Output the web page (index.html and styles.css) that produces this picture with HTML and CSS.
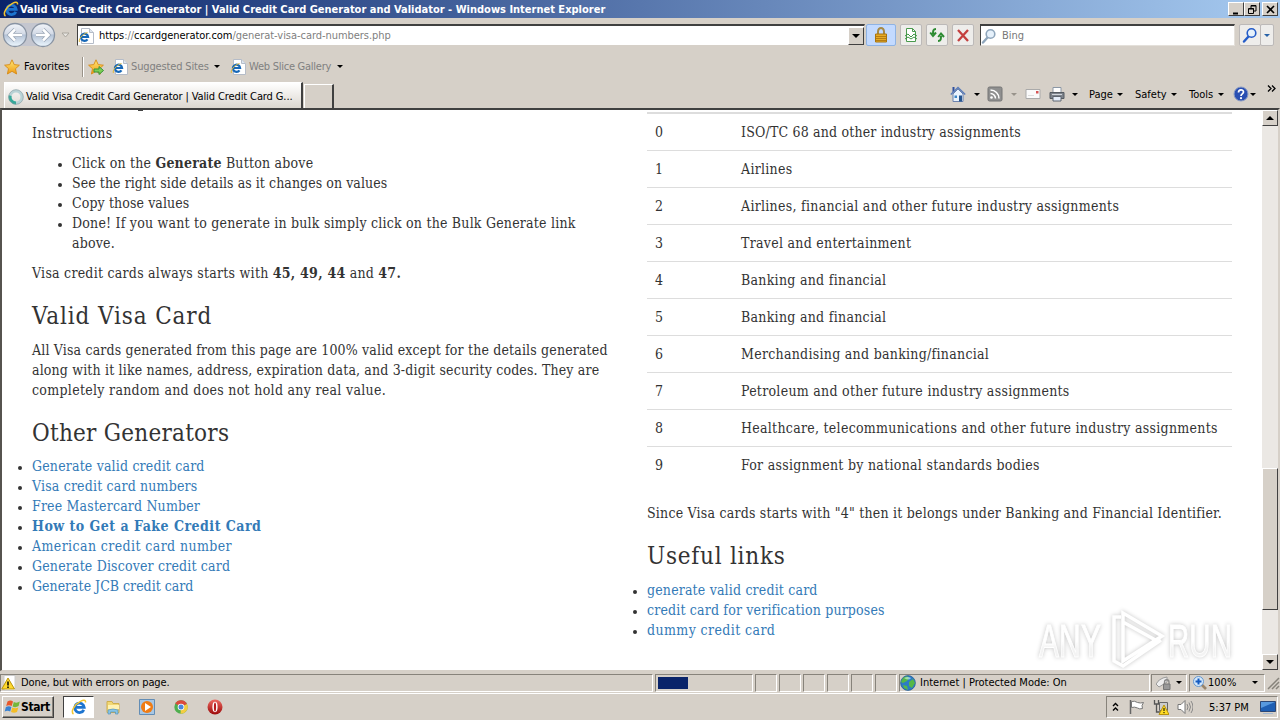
FILE: index.html
```
<!DOCTYPE html>
<html lang="en">
<head>
    <meta charset="UTF-8">
    <meta name="viewport" content="width=device-width, initial-scale=1.0">
    <title>Valid Visa Credit Card Generator | Valid Credit Card Generator and Validator</title>
    <link rel="stylesheet" href="styles.css">
</head>
<body>
    <svg class="defs" width="0" height="0">
        <defs>
            <linearGradient id="gold" x1="0" y1="0" x2="0" y2="1"><stop offset="0" stop-color="#ffe978"/><stop offset="1" stop-color="#ef9a12"/></linearGradient>
            <linearGradient id="orb" x1="0" y1="0" x2="0" y2="1"><stop offset="0" stop-color="#f2f5fa"/><stop offset=".45" stop-color="#d3dae6"/><stop offset=".5" stop-color="#b4c2d6"/><stop offset="1" stop-color="#eef8ff"/></linearGradient>
            <linearGradient id="red" x1="0" y1="0" x2="0" y2="1"><stop offset="0" stop-color="#ee6a62"/><stop offset="1" stop-color="#9c0a0a"/></linearGradient>
            <linearGradient id="wm" x1="0" y1="0" x2="0" y2="1"><stop offset=".5" stop-color="#fff"/><stop offset=".65" stop-color="#f3f3f3"/></linearGradient>
            <symbol id="ie" viewBox="0 0 16 16">
                <path d="M12.800 10.800a4.700 4.700 0 1 1 .4-2.500H5" fill="none" stroke="#1d74cf" stroke-width="2.800"/>
                <path d="M2.500 15C-1 13 4 5 9.500 2.300 12 1 15 .5 14.500 3.500" fill="none" stroke="#f3c52f" stroke-width="1.500"/>
            </symbol>
            <symbol id="iepage" viewBox="0 0 16 16">
                <path d="M3.500.5h8l4 4v11h-12z" fill="#fff" stroke="#b5bcc8"/>
                <path d="M11.500.5v4h4" fill="#dde5ef" stroke="#b5bcc8"/>
                <path d="M9.500 11.300a3.600 3.600 0 1 1 .6-2.300H3.500" fill="none" stroke="#1768b8" stroke-width="2.200"/>
                <path d="M1.500 14C0 12 4 6 9.500 4.500" fill="none" stroke="#e0b93a"/>
            </symbol>
            <symbol id="star" viewBox="0 0 16 16">
                <path d="M8 .8l2.200 4.800 5.200.6-3.900 3.500 1.100 5.300L8 12.300 3.400 15l1.100-5.300L.6 6.200l5.200-.6z" fill="url(#gold)" stroke="#d68a17" stroke-width=".9"/>
            </symbol>
            <symbol id="lens" viewBox="0 0 16 16">
                <path d="M6.500 9.500L2 14.500" stroke="currentColor" stroke-width="2.400" stroke-linecap="round"/>
                <circle cx="9.500" cy="6" r="4.300" fill="#e6f1fb" stroke="currentColor" stroke-width="1.600"/>
            </symbol>
        </defs>
    </svg>

    <div class="window">
        <div class="titlebar">
            <svg class="ic"><use href="#ie"/></svg>
            <span class="title">Valid Visa Credit Card Generator | Valid Credit Card Generator and Validator - Windows Internet Explorer</span>
            <div class="winbtns">
                <svg class="winbtn"><path d="M4 10.500h5" stroke="#000" stroke-width="2"/></svg>
                <svg class="winbtn"><path d="M6 3h5M6 6V2.500h5V8H9M4 6h5M3.500 5.500h5v5h-5z" fill="none" stroke="#000"/></svg>
                <svg class="winbtn close"><path d="M4 3l7 7M11 3l-7 7" stroke="#000" stroke-width="1.600"/></svg>
            </div>
        </div>

        <div class="nav">
            <svg class="orbs" viewBox="0 0 54 27">
                <rect x="8" y="1" width="38" height="23" fill="#c4c6cf"/>
                <circle cx="13" cy="13" r="11.500" fill="url(#orb)" stroke="#8994a3" stroke-width="1.300"/>
                <circle cx="41" cy="13" r="11.500" fill="url(#orb)" stroke="#8994a3" stroke-width="1.300"/>
                <path d="M20 13H8m5-5.500L7.500 13l5.500 5.500" fill="none" stroke="#98a5b5" stroke-width="4"/>
                <path d="M34 13h12m-5-5.500l5.500 5.500-5.500 5.500" fill="none" stroke="#98a5b5" stroke-width="4"/>
                <path d="M20 13H8m5-5.500L7.500 13l5.500 5.500" fill="none" stroke="#fff" stroke-width="2.600"/>
                <path d="M34 13h12m-5-5.500l5.500 5.500-5.500 5.500" fill="none" stroke="#fff" stroke-width="2.600"/>
            </svg>
            <svg class="history" viewBox="0 0 9 6"><path d="M1 1h7L4.500 5z" fill="#e8e6e2" stroke="#aaa69e"/></svg>
            <div class="address">
                <svg class="ic"><use href="#iepage"/></svg>
                <span class="url">https<i>://</i>ccardgenerator.com<i>/generat-visa-card-numbers.php</i></span>
                <span class="drop"><b class="arrow"></b></span>
            </div>
            <div class="tool lock">
                <svg class="ic"><path d="M5 8V4.500a3 3.500 0 0 1 6 0V8" fill="none" stroke="#a68a48" stroke-width="2"/><path d="M2.500 7h11v8h-11z" fill="#e8ab25" stroke="#a87410"/><path d="M3 9.500h10M3 11.500h10M3 13.500h10" stroke="#b57d14"/></svg>
            </div>
            <div class="tool">
                <svg class="ic"><path d="M3.500 1.500h6l3 3v10h-9z" fill="#fff" stroke="#4a9a4d"/><path d="M9.500 1.500v3h3" fill="none" stroke="#4a9a4d"/><path d="M2 9l3-2 3 3 3-3 3 2M2 12l3-2 3 2 3-2 3 2" fill="none" stroke="#3f9545"/></svg>
            </div>
            <div class="tool">
                <svg class="ic"><path d="M7 2C4 2 4 4 4 7M1.200 5.500L4 9l3-3.500M9 14c3 0 3-2 3-5M9.200 10L12 6.500l3 3.500" fill="none" stroke="#2c8a31" stroke-width="2"/></svg>
            </div>
            <div class="tool">
                <svg class="ic"><path d="M3 3l10 11M13 3L3 14" stroke="#c4403f" stroke-width="2.300"/></svg>
            </div>
            <div class="search">
                <svg class="ic"><use href="#lens"/></svg>
                <span>Bing</span>
            </div>
            <div class="tool go"><svg class="ic"><use href="#lens"/></svg></div>
            <div class="tool godrop"><b class="arrow blue"></b></div>
        </div>

        <div class="favorites">
            <svg class="ic"><use href="#star"/></svg>
            <span class="favtext">Favorites</span>
            <span class="sep"></span>
            <svg class="ic"><use href="#star"/><path d="M6 10h5V7.500l4.500 4L11 15.500V13H6z" fill="#7ccf55" stroke="#38923a"/></svg>
            <svg class="ic sug"><use href="#iepage"/></svg>
            <span class="muted sugtext">Suggested Sites</span><b class="arrow"></b>
            <svg class="ic web"><use href="#iepage"/></svg>
            <span class="muted webtext">Web Slice Gallery</span><b class="arrow"></b>
        </div>

        <div class="tabs">
            <div class="tab">
                <svg class="ic"><circle cx="8" cy="8" r="6" fill="none" stroke="#b9d3d6" stroke-width="3"/><path d="M2.200 6.500A6 6 0 0 0 8 14" fill="none" stroke="#35a99a" stroke-width="3"/><circle cx="8" cy="8" r="7.300" fill="none" stroke="#8a9aa0" stroke-width=".6"/></svg>
                <span>Valid Visa Credit Card Generator | Valid Credit Card G...</span>
            </div>
            <div class="newtab"></div>
            <div class="commands">
                <svg class="ic"><path d="M2.500 1v5h2V1z" fill="#2e4f9e"/><path d="M3 8l5-5 5 5v7.500H3z" fill="#e9f2fd" stroke="#6b82ae"/><path d="M.8 8.500L8 1.500l7.200 7" fill="none" stroke="#5b7cb8" stroke-width="1.500"/><path d="M9 9.500h3v6H9z" fill="#26558f"/><path d="M4.500 9.500h2.500v2.500H4.500z" fill="#3c87c7"/></svg>
                <b class="arrow a1"></b>
                <svg class="ic rss" viewBox="0 0 16 16"><rect x="1" y="1" width="14" height="14" rx="1.500" fill="#8f8f8f" stroke="#757575"/><circle cx="4.500" cy="11.500" r="1.300" fill="#fff"/><path d="M3.500 7.500a5 5 0 0 1 5 5M3.500 4a8.500 8.500 0 0 1 8.500 8.500" fill="none" stroke="#fff" stroke-width="1.500"/></svg>
                <b class="arrow a2 dim"></b>
                <svg class="ic mail" viewBox="0 0 16 16"><path d="M1 3.500h14v9H1z" fill="#fafafa" stroke="#aaa"/><path d="M11 5h2.500v2.500H11z" fill="#d65454"/><path d="M3 9.500h6" stroke="#ddd"/></svg>
                <svg class="ic printer"><path d="M4 1.500h8v5H4z" fill="#fff" stroke="#8b97a5"/><path d="M1 6.500h14v6H1z" fill="#7d838b" stroke="#555b62"/><path d="M3 8.500h10" stroke="#d1d6dc"/><path d="M4 10.500h8v4.500H4z" fill="#e5eefa" stroke="#5f6670"/></svg>
                <b class="arrow a3"></b>
                <span class="menu page-m">Page</span><b class="arrow"></b>
                <span class="menu safety-m">Safety</span><b class="arrow"></b>
                <span class="menu tools-m">Tools</span><b class="arrow"></b>
                <svg class="ic help"><circle cx="8" cy="8" r="7" fill="#2a4fb2" stroke="#8b9cc4"/><path d="M5.500 6.500C5.500 3 10.500 3 10.500 6 10.500 8 8 7.800 8 10" fill="none" stroke="#fff" stroke-width="1.700"/><circle cx="8" cy="12.200" r="1.100" fill="#fff"/></svg>
                <b class="arrow"></b>
                <svg class="more" viewBox="0 0 9 7"><path d="M1 .5l3 3-3 3M5 .5l3 3-3 3" fill="none" stroke="#000" stroke-width="1.300"/></svg>
            </div>
        </div>

        <div class="viewport">
            <div class="page">
                <span class="cut"></span>
                <div class="col left">
                    <p class="t1">Instructions</p>
                    <ul class="steps">
                        <li>Click on the <strong>Generate</strong> Button above</li>
                        <li class="s2">See the right side details as it changes on values</li>
                        <li class="s3">Copy those values</li>
                        <li>Done! If you want to generate in bulk simply click on the Bulk Generate link<br>above.</li>
                    </ul>
                    <p class="t2">Visa credit cards always starts with <strong>45, 49, 44</strong> and <strong>47.</strong></p>
                    <h3 class="h-valid">Valid Visa Card</h3>
                    <p class="t3">All Visa cards generated from this page are 100% valid except for the details generated<br>along with it like names, address, expiration data, and 3-digit security codes. They are<br><span>completely random and does not hold any real value.</span></p>
                    <h3 class="h-other">Other Generators</h3>
                    <ul class="links">
                        <li><a>Generate valid credit card</a></li>
                        <li><a>Visa credit card numbers</a></li>
                        <li><a>Free Mastercard Number</a></li>
                        <li><a><strong>How to Get a Fake Credit Card</strong></a></li>
                        <li><a class="wide">American credit card number</a></li>
                        <li><a>Generate Discover credit card</a></li>
                        <li><a class="tight">Generate JCB credit card</a></li>
                    </ul>
                </div>
                <div class="col right">
                    <table>
                        <tr><td>0</td><td class="iso">ISO/TC 68 and other industry assignments</td></tr>
                        <tr><td>1</td><td>Airlines</td></tr>
                        <tr><td>2</td><td>Airlines, financial and other future industry assignments</td></tr>
                        <tr><td>3</td><td>Travel and entertainment</td></tr>
                        <tr><td>4</td><td>Banking and financial</td></tr>
                        <tr><td>5</td><td>Banking and financial</td></tr>
                        <tr><td>6</td><td>Merchandising and banking/financial</td></tr>
                        <tr><td>7</td><td>Petroleum and other future industry assignments</td></tr>
                        <tr><td>8</td><td>Healthcare, telecommunications and other future industry assignments</td></tr>
                        <tr><td>9</td><td>For assignment by national standards bodies</td></tr>
                    </table>
                    <p class="t4">Since Visa cards starts with "4" then it belongs under Banking and Financial Identifier.</p>
                    <h3 class="h-useful">Useful links</h3>
                    <ul class="links">
                        <li><a>generate valid credit card</a></li>
                        <li><a>credit card for verification purposes</a></li>
                        <li><a class="wide">dummy credit card</a></li>
                    </ul>
                </div>
                <svg class="watermark" viewBox="0 0 204 62">
                    <g class="wm-text">
                        <text x="6" y="49" textLength="62" lengthAdjust="spacingAndGlyphs">ANY</text>
                        <text x="135" y="49" textLength="64" lengthAdjust="spacingAndGlyphs">RUN</text>
                    </g>
                    <path class="wm-logo" d="M88 9h-7v44l9 5 38-26M90 5v48l39-25zM90 14l36 20"/>
                </svg>
            </div>
            <div class="scroll">
                <span class="sbtn"><b class="arrow up"></b></span>
                <span class="thumb"></span>
                <span class="sbtn end"><b class="arrow"></b></span>
            </div>
        </div>

        <div class="status">
            <div class="pane msg">
                <svg class="ic"><path d="M3 .5h11v15H3z" fill="#fff" stroke="#ccc"/><path d="M7 3l6.500 11H.8z" fill="#ffd92e" stroke="#b99409"/><path d="M7 6.500v4M7 11.500v1.500" stroke="#000" stroke-width="1.500"/></svg>
                <span>Done, but with errors on page.</span>
            </div>
            <div class="pane progress"><span></span></div>
            <div class="pane cell"></div>
            <div class="pane cell"></div>
            <div class="pane cell"></div>
            <div class="pane cell"></div>
            <div class="pane cell"></div>
            <div class="pane cell"></div>
            <div class="pane zone">
                <svg class="ic"><circle cx="8" cy="8" r="7.400" fill="#2c7cc4" stroke="#23588d" stroke-width=".7"/><path d="M3 3c3-2 5-2 6 0L7 6l-4 2-2-1zM9 7l4-3 2 4-3 5-3-2zM3 10l4 1 1 4-4-2z" fill="#55b846"/><path d="M4 3q4-2 7 0-2 3-7 0" fill="#d4f3fa" opacity=".6"/></svg>
                <span>Internet | Protected Mode: On</span>
            </div>
            <div class="pane privacy">
                <svg class="ic" viewBox="0 0 16 16"><path d="M0 9q3-5 7-6l4-1v5L3 12z" fill="#eee" stroke="#999"/><path d="M8.500 9V7a2 2 0 0 1 4.500 0v2" fill="none" stroke="#888" stroke-width="1.300"/><path d="M7.500 9h6.500v5.500H7.500z" fill="#999" stroke="#777"/></svg>
                <b class="arrow"></b>
            </div>
            <div class="pane zoom">
                <svg class="ic"><path d="M9 9l5 5" stroke="#9a856b" stroke-width="2.600"/><circle cx="6.500" cy="6.500" r="5" fill="#d4e8fb" stroke="#6497cf"/><path d="M6.500 3.500v6M3.500 6.500h6" stroke="#145ac0" stroke-width="2"/></svg>
                <span>100%</span><b class="arrow"></b>
            </div>
            <svg class="grip" viewBox="0 0 13 14"><path d="M1 13L12 2M5 13l7-7M9 13l3-3" stroke="#87837b" stroke-width="1.500"/></svg>
        </div>

        <div class="taskbar">
            <div class="start">
                <svg class="ic" viewBox="0 0 16 16"><path d="M3.500 2.500q3-2 5.500 0L7.700 7Q5 5.500 2.200 7z" fill="#e9582b"/><path d="M9.800 3q3 1.500 6-.5l-1.200 4.500q-3 2-6 .5z" fill="#75b73b"/><path d="M1.900 8q3-1.500 5.500 0L6.200 12.500q-2.500-1.500-5.500 0z" fill="#3982d2"/><path d="M8.300 8.500q3 1.500 6 0L13 13q-3 1.500-6 0z" fill="#f4bd26"/></svg>
                <span>Start</span>
            </div>
            <div class="task active"><svg class="ic"><use href="#ie"/></svg></div>
            <svg class="ic explorer"><path d="M2 2.500h5l1 2h6v9H2z" fill="#f2d874" stroke="#cfae4e"/><path d="M3 6h11v4H3z" fill="#fff2b3"/><path d="M3 15v-4q5-2 10 0v4h-2.500v-2h-5v2z" fill="#87c4e4" stroke="#5796bd" stroke-width=".7"/></svg>
            <svg class="ic media"><path d="M.5.500h15v15H.5z" fill="#a8c7e4" stroke="#638db5"/><circle cx="8" cy="8" r="6" fill="#f07c14"/><path d="M6 4l6 4-6 4z" fill="#fff"/></svg>
            <svg class="ic chrome"><circle cx="8" cy="8" r="6.700" fill="#4fae4e"/><path d="M8 8L2.200 4.600A6.700 6.700 0 0 1 14 5z" fill="#dc4a3d"/><path d="M8 8l6-3a6.700 6.700 0 0 1-6.500 9.700z" fill="#f4cd42"/><circle cx="8" cy="8" r="3.300" fill="#fff"/><circle cx="8" cy="8" r="2.500" fill="#4b87dd"/></svg>
            <svg class="ic opera"><circle cx="8" cy="8" r="7.500" fill="url(#red)"/><ellipse cx="8" cy="8" rx="2.600" ry="5.200" fill="#fff"/><ellipse cx="8" cy="8" rx="1.100" ry="4.600" fill="#b81b1c"/></svg>
            <div class="tray">
                <svg class="chev" viewBox="0 0 7 10"><path d="M1 4l2.500-2.500L6 4M1 8.500L3.500 6 6 8.500" fill="none" stroke="#000" stroke-width="1.400"/></svg>
                <svg class="ic flag"><path d="M1.500 1v14" stroke="#666" stroke-width="1.500"/><path d="M2.500 2.500q3-1 6 1 3 1 6 0l-1.500 3 .5 3q-3 1-5-.5-3-1.500-6-.5z" fill="#fff" stroke="#777"/></svg>
                <svg class="ic net"><path d="M6.500 3.500h8v8h-8z" fill="#ccc" stroke="#666"/><path d="M1.500 1v4h4V1M3.500 5v8h4" fill="none" stroke="#555" stroke-width="1.300"/><path d="M11 6l5 9.500H6z" fill="#ffdc25" stroke="#b7920e"/><path d="M11 9v3m0 1v1.200" stroke="#000"/></svg>
                <svg class="ic vol"><path d="M1 5.500h3l4-4v13l-4-4H1z" fill="#fff" stroke="#777"/><path d="M10 5q2 3 0 6M12 3.500q3 4.500 0 9M14 2q4 6 0 12" fill="none" stroke="#888"/></svg>
                <span class="clock">5:37 PM</span>
                <svg class="ic desk"><path d="M.5 2.500h15v10H.5z" fill="#1e5fb4" stroke="#2c4775"/><path d="M1 3h14L1 9z" fill="#5799df"/><path d="M3 14.500h10" stroke="#a2b8d2"/></svg>
            </div>
        </div>
    </div>
</body>
</html>
```
FILE: styles.css
```
* {
    box-sizing: border-box;
}

body {
    margin: 0;
    background: #d6d0c8;
    font-family: "DejaVu Sans Condensed", "DejaVu Sans", sans-serif;
    font-stretch: condensed;
    font-size: 11px;
    color: #000;
}

.defs {
    position: absolute;
}

.window {
    width: 1280px;
    height: 720px;
    display: flex;
    flex-direction: column;
    overflow: hidden;
    white-space: nowrap;
}

.window svg {
    flex: none;
    display: block;
}

.ic {
    width: 16px;
    height: 16px;
}

.arrow {
    flex: none;
    width: 0;
    height: 0;
    border: 3px solid transparent;
    border-top: 3px solid #000;
    border-bottom: 0;
}

.arrow.up {
    border-top: 0;
    border-bottom: 4px solid #000;
}

.arrow.blue {
    border-top-color: #2862a8;
}

.arrow.dim {
    border-top-color: #98938b;
}

/* title bar */
.titlebar {
    height: 18px;
    display: flex;
    align-items: center;
    padding: 0 2px 0 3px;
    background: linear-gradient(to right, #0a246a, #a6caf0);
    color: #fff;
}

.title {
    margin-left: 1px;
    font-weight: bold;
    flex: 1;
}

.winbtns {
    display: flex;
}

.winbtn {
    width: 16px;
    height: 14px;
    background: #d6d0c8;
    border: 1px solid;
    border-color: #fff #404040 #404040 #fff;
}

.winbtn.close {
    margin-left: 2px;
}

/* address row */
.nav {
    height: 34px;
    display: flex;
    align-items: center;
    padding-left: 2px;
}

.orbs {
    width: 54px;
    height: 27px;
}

.history {
    width: 9px;
    height: 6px;
    margin-left: 5px;
}

.address {
    width: 788px;
    height: 22px;
    margin-left: 7px;
    display: flex;
    align-items: center;
    background: #fff;
    border: 1px solid;
    border-color: #404040 #d6d0c8 #d6d0c8 #404040;
    border-top-width: 2px;
}

.url {
    margin-left: 5px;
    flex: 1;
    letter-spacing: -0.05px;
}

.url i {
    font-style: normal;
    color: #808080;
}

.drop {
    width: 16px;
    height: 18px;
    display: flex;
    align-items: center;
    justify-content: center;
    background: #d6d0c8;
    border: 1px solid;
    border-color: #fff #404040 #404040 #fff;
}

.drop .arrow {
    border-width: 4px 4px 0;
}

.tool {
    width: 22px;
    height: 22px;
    margin-left: 4px;
    display: flex;
    align-items: center;
    justify-content: center;
    border: 1px solid #bcb9b8;
    border-radius: 2px;
    background: #eeedeb;
}

.tool.lock {
    width: 30px;
    margin-left: 1px;
    background: #c3daff;
    border-color: #8fb3e3;
}

.search {
    width: 255px;
    height: 22px;
    margin-left: 6px;
    display: flex;
    align-items: center;
    background: #fff;
    border: 1px solid;
    border-color: #404040 #e4e0da #e4e0da #404040;
    border-top-width: 2px;
    color: #777;
}

.search .ic {
    color: #8fa6bc;
}

.search span {
    margin-left: 5px;
}

.tool.go {
    margin-left: 4px;
    color: #245cc8;
}

.tool.godrop {
    width: 14px;
    margin-left: -1px;
}

/* favorites row */
.favorites {
    height: 29px;
    margin-bottom: 1px;
    display: flex;
    align-items: center;
    padding-left: 4px;
}

.favtext {
    width: 58px;
    margin-left: 4px;
    letter-spacing: 0.1px;
}

.sep {
    width: 2px;
    height: 20px;
    margin: 0 4px 0 0;
    border-left: 1px solid #999288;
    border-right: 1px solid #fff;
}

.sug {
    margin-left: 8px;
}

.muted {
    color: #808080;
    margin-left: 3px;
    letter-spacing: -0.15px;
}

.sugtext {
    width: 83px;
}

.web {
    margin-left: 10px;
}

.webtext {
    width: 88px;
    letter-spacing: -0.25px;
}

/* tab row */
.tabs {
    height: 26px;
    display: flex;
    padding-left: 4px;
}

.tab {
    width: 299px;
    height: 26px;
    padding: 2px 0 0 3px;
    display: flex;
    align-items: center;
    background: linear-gradient(#fff, #dcd7d0);
    border: 1px solid #fff;
    border-right: 2px solid #404040;
    border-bottom: 0;
}

.tab span {
    margin-left: 2px;
    letter-spacing: -0.11px;
}

.newtab {
    width: 30px;
    height: 24px;
    margin: 2px 0 0 1px;
    border: 1px solid #fff;
    border-right: 2px solid #404040;
    border-bottom: 0;
}

.commands {
    display: flex;
    align-items: center;
    margin-left: 616px;
    height: 24px;
}

.a1 {
    margin-left: 8px;
}

.rss {
    margin-left: 7px;
}

.a2 {
    margin-left: 8px;
}

.mail {
    margin-left: 8px;
}

.printer {
    margin-left: 8px;
}

.a3 {
    margin-left: 7px;
}

.page-m {
    margin-left: 11px;
    width: 28px;
}

.safety-m {
    margin-left: 12px;
    width: 36px;
}

.tools-m {
    margin-left: 12px;
    width: 29px;
}

.help {
    margin-left: 9px;
}

.help + .arrow {
    margin-left: 1px;
}

.more {
    width: 9px;
    height: 7px;
    margin: -12px 0 0 11px;
}

/* web page */
.viewport {
    height: 563px;
    display: flex;
    border-top: 2px solid #404040;
    border-left: 2px solid #56534f;
    border-bottom: 1px solid #d6d0c8;
    border-right: 2px solid #d6d0c8;
}

.page {
    position: relative;
    flex: 1;
    display: flex;
    gap: 30px;
    padding-left: 30px;
    overflow: hidden;
    background: #fff;
    color: #333;
    font: 14px/20px "DejaVu Serif Condensed", "DejaVu Serif", serif;
    font-stretch: condensed;
    letter-spacing: 0.21px;
}

.cut {
    position: absolute;
    left: 136px;
    top: 0;
    width: 5px;
    height: 1px;
    background: #444;
}

.col {
    width: 585px;
    flex: none;
}

.left {
    padding-top: 13px;
}

.right {
    padding-top: 3px;
}

.page p {
    margin: 0 0 10px;
}

.page h3 {
    margin: 20px 0 10px;
    font-weight: normal;
    font-size: 24px;
    line-height: 27px;
}

.h-valid {
    letter-spacing: 0.87px;
}

.page .h-other {
    letter-spacing: 0.25px;
    margin-bottom: 9px;
}

.h-useful {
    letter-spacing: 0.75px;
}

.t1 {
    letter-spacing: 0.28px;
}

.s2 {
    letter-spacing: 0.06px;
}

.s3 {
    letter-spacing: 0.1px;
}

.t2 {
    letter-spacing: 0.25px;
}

.t3 {
    letter-spacing: 0.16px;
}

.t3 span {
    letter-spacing: 0.3px;
}

.page ul {
    margin: 0 0 10px;
    padding: 0;
}

.page .steps {
    padding-left: 40px;
}

.page li::marker {
    font-size: 12px;
    color: #333;
}

.page a {
    color: #337ab7;
    letter-spacing: 0.17px;
}

.page a strong {
    letter-spacing: 0.49px;
}

.page a.wide {
    letter-spacing: 0.4px;
}

.page a.tight {
    letter-spacing: 0;
}

table {
    width: 585px;
    margin-bottom: 20px;
    border-collapse: separate;
    border-spacing: 0;
    letter-spacing: 0.28px;
}

td {
    height: 37px;
    padding: 8px;
    border-top: 1px solid #ddd;
}

tr:first-child td {
    box-shadow: 0 -1px #ddd;
}

td:first-child {
    width: 86px;
}

td.iso {
    letter-spacing: 0.18px;
}

.right .t4 {
    margin-bottom: 20px;
}

.watermark {
    position: absolute;
    left: 1031px;
    top: 498px;
    width: 204px;
    height: 62px;
    filter: drop-shadow(0 0 2px #c4c4c4);
}

.wm-text {
    font-family: "Liberation Sans", sans-serif;
    font-size: 46px;
    fill: url(#wm);
    stroke: #fff;
    stroke-width: 1;
}

.wm-logo {
    fill: none;
    stroke: #fff;
    stroke-width: 3.5;
}

/* scrollbar */
.scroll {
    width: 16px;
    display: flex;
    flex-direction: column;
    background: #ebe8e4;
}

.sbtn,
.thumb {
    flex: none;
    height: 16px;
    display: flex;
    align-items: center;
    justify-content: center;
    background: #d6d0c8;
    border: 1px solid;
    border-color: #fff #404040 #404040 #fff;
}

.sbtn .arrow {
    border-left-width: 4px;
    border-right-width: 4px;
}

.sbtn .arrow:not(.up) {
    border-top-width: 4px;
}

.thumb {
    height: 142px;
    margin-top: 342px;
}

.sbtn.end {
    margin-top: auto;
}

/* status bar */
.status {
    height: 23px;
    display: flex;
    align-items: center;
    padding-top: 1px;
    border-bottom: 1px solid #fff;
}

.pane {
    height: 18px;
    flex: none;
    display: flex;
    align-items: center;
    border: 1px solid;
    border-color: #87837b #fff #fff #87837b;
}

.msg {
    width: 653px;
}

.msg span {
    margin-left: 4px;
    letter-spacing: -0.1px;
}

.progress {
    width: 98px;
    margin-left: 2px;
    padding-left: 2px;
}

.progress span {
    width: 30px;
    height: 12px;
    background: #0a246a;
}

.cell {
    width: 22px;
    margin-left: 2px;
}

.zone {
    width: 251px;
    margin-left: 2px;
}

.zone span {
    margin-left: 4px;
}

.privacy {
    width: 36px;
    margin-left: 1px;
    padding-left: 4px;
    gap: 4px;
}

.zoom {
    width: 76px;
    margin-left: 2px;
    padding-left: 2px;
}

.zoom span {
    width: 44px;
    margin-left: 0;
}

.grip {
    width: 13px;
    height: 14px;
    margin-left: 2px;
}

/* taskbar */
.taskbar {
    height: 26px;
    display: flex;
    align-items: center;
    padding-left: 2px;
}

.start {
    width: 52px;
    height: 22px;
    display: flex;
    align-items: center;
    padding-left: 1px;
    border: 1px solid;
    border-color: #fff #404040 #404040 #fff;
    box-shadow: inset -1px -1px #87837b;
    font-weight: bold;
}

.start span {
    margin-left: 1px;
    font-size: 12px;
    letter-spacing: -0.4px;
}

.task {
    width: 31px;
    height: 22px;
    margin-left: 9px;
    display: flex;
    align-items: center;
    justify-content: center;
    background: #fff;
    border: 1px solid;
    border-color: #404040 #fff #fff #404040;
}

.explorer {
    margin-left: 11px;
}

.media,
.chrome,
.opera {
    margin-left: 18px;
}

.tray {
    width: 172px;
    height: 22px;
    margin-left: auto;
    margin-right: 2px;
    display: flex;
    align-items: center;
    padding-left: 5px;
    border: 1px solid;
    border-color: #87837b #fff #fff #87837b;
}

.chev {
    width: 7px;
    height: 10px;
}

.flag {
    margin-left: 10px;
}

.net,
.vol {
    margin-left: 8px;
}

.clock {
    width: 51px;
    margin-left: 16px;
}
```
